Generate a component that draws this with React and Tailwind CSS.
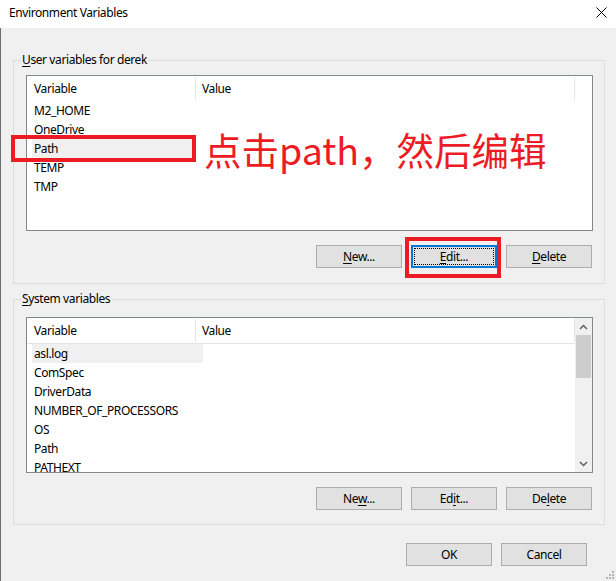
import React from "react";

const userVars = ["M2_HOME", "OneDrive", "Path", "TEMP", "TMP"];
const systemVars = [
  "asl.log",
  "ComSpec",
  "DriverData",
  "NUMBER_OF_PROCESSORS",
  "OS",
  "Path",
  "PATHEXT",
];

function Mnemonic({ text, at }) {
  // underline the access-key letter, like the Windows dialog does
  return (
    <span>
      {text.slice(0, at)}
      <span className="underline underline-offset-[2px]">{text[at]}</span>
      {text.slice(at + 1)}
    </span>
  );
}

function WinButton({ children, focused }) {
  if (focused) {
    return (
      <button className="w-[86px] h-[23px] border-2 border-[#0078d7] bg-[#e1e1e1] p-[1px]">
        <div className="w-full h-full border border-dotted border-black flex items-center justify-center">
          {children}
        </div>
      </button>
    );
  }
  return (
    <button className="w-[86px] h-[23px] border border-[#adadad] bg-[#e1e1e1] flex items-center justify-center">
      {children}
    </button>
  );
}

function Scrollbar() {
  return (
    <div className="w-[17px] bg-[#f0f0f0] flex flex-col">
      <div className="h-[17px] flex items-center justify-center">
        <svg width="9" height="6" viewBox="0 0 9 6">
          <path d="M1 5 L4.5 1.5 L8 5" fill="none" stroke="#606060" strokeWidth="1.5" />
        </svg>
      </div>
      <div className="h-[43px] mx-[1px] bg-[#cdcdcd]" />
      <div className="flex-1" />
      <div className="h-[17px] flex items-center justify-center">
        <svg width="9" height="6" viewBox="0 0 9 6">
          <path d="M1 1 L4.5 4.5 L8 1" fill="none" stroke="#606060" strokeWidth="1.5" />
        </svg>
      </div>
    </div>
  );
}

function VarList({ rows, highlight, highlightWidth, scroll, headerLine }) {
  return (
    <div className="h-[156px] border border-[#828790] bg-white flex overflow-hidden">
      <div className="flex-1 flex flex-col">
        <div
          className={
            headerLine
              ? "h-[26px] shrink-0 flex border-b border-[#e5e5e5] w-[548px]"
              : "h-[25px] shrink-0 flex w-[548px]"
          }
        >
          <div className="w-[169px] pl-[7px] my-[1px] flex items-center border-r border-[#e5e5e5]">
            Variable
          </div>
          <div className="w-[379px] pl-[6px] my-[1px] flex items-center border-r border-[#e5e5e5]">
            Value
          </div>
        </div>
        {rows.map((name, i) => (
          <div key={name} className="h-[19px] shrink-0 flex items-center pl-[5px]">
            <div
              className={
                i === highlight
                  ? "h-full flex items-center pl-[2px] bg-[#f0f0f0]"
                  : "h-full flex items-center pl-[2px]"
              }
              style={{ width: highlightWidth }}
            >
              {name}
            </div>
          </div>
        ))}
      </div>
      {scroll && <Scrollbar />}
    </div>
  );
}

function GroupBox({ label, at, className, children }) {
  return (
    <div className={"relative ml-[13px] w-[592px] border border-[#dcdcdc] " + className}>
      <div className="absolute left-[7px] -top-[9px] px-[1px] leading-[16px] bg-[#f0f0f0]">
        <Mnemonic text={label} at={at} />
      </div>
      {children}
    </div>
  );
}

export default function App() {
  return (
    <div className="relative w-[616px] h-[581px] bg-[#f0f0f0] overflow-hidden text-[12px] tracking-[-0.4px] text-black font-['Noto_Sans','Noto_Sans_CJK_SC',sans-serif]">
      <div className="h-[28px] bg-white flex items-center justify-between pl-[9px] pr-[9px]">
        <span className="-mt-[2px]">Environment Variables</span>
        <svg width="11" height="11" viewBox="0 0 11 11" className="-mt-[3px]">
          <path d="M0.5 0.5 L10.5 10.5 M10.5 0.5 L0.5 10.5" stroke="#000" strokeWidth="1" />
        </svg>
      </div>

      <div className="h-[553px] shadow-[inset_1px_0_0_#6e6e6e] flex flex-col">
        <GroupBox label="User variables for derek" at={0} className="mt-[32px] pt-[14px] pl-[12px] pr-[11px] pb-[15px]">
          <VarList rows={userVars} highlight={2} highlightWidth={161} />
          <div className="mt-[14px] mr-[1px] flex justify-end gap-[9px]">
            <WinButton>
              <Mnemonic text="New..." at={0} />
            </WinButton>
            <WinButton focused>
              <Mnemonic text="Edit..." at={0} />
            </WinButton>
            <WinButton>
              <Mnemonic text="Delete" at={0} />
            </WinButton>
          </div>
        </GroupBox>

        <GroupBox label="System variables" at={0} className="mt-[15px] pt-[17px] pl-[12px] pr-[11px] pb-[14px]">
          <VarList rows={systemVars} highlight={0} highlightWidth={171} scroll headerLine />
          <div className="mt-[14px] mr-[1px] flex justify-end gap-[9px]">
            <WinButton>
              <Mnemonic text="New..." at={2} />
            </WinButton>
            <WinButton>
              <Mnemonic text="Edit..." at={2} />
            </WinButton>
            <WinButton>
              <Mnemonic text="Delete" at={2} />
            </WinButton>
          </div>
        </GroupBox>

        <div className="mt-[18px] pr-[29px] flex justify-end gap-[9px]">
          <WinButton>OK</WinButton>
          <WinButton>Cancel</WinButton>
        </div>
      </div>

      {/* annotation overlays */}
      <div className="absolute left-[11px] top-[135px] w-[185px] h-[27px] border-[4px] border-[#ed1c24]" />
      <div className="absolute left-[405px] top-[237px] w-[96px] h-[41px] border-[4px] border-[#ed1c24]" />
      <div className="absolute left-[204px] top-[130px] leading-none tracking-normal text-[37.5px] text-[#ed1c24] font-['Noto_Sans_CJK_SC',sans-serif] whitespace-nowrap">
        点击path，然后编辑
      </div>

      <svg width="10" height="10" viewBox="0 0 10 10" className="absolute left-[606px] top-[571px]">
        <rect x="6" y="0" width="2" height="2" fill="#b4b4b4" />
        <rect x="3" y="3" width="2" height="2" fill="#b4b4b4" />
        <rect x="6" y="3" width="2" height="2" fill="#b4b4b4" />
        <rect x="0" y="6" width="2" height="2" fill="#b4b4b4" />
        <rect x="3" y="6" width="2" height="2" fill="#b4b4b4" />
        <rect x="6" y="6" width="2" height="2" fill="#b4b4b4" />
      </svg>
    </div>
  );
}
